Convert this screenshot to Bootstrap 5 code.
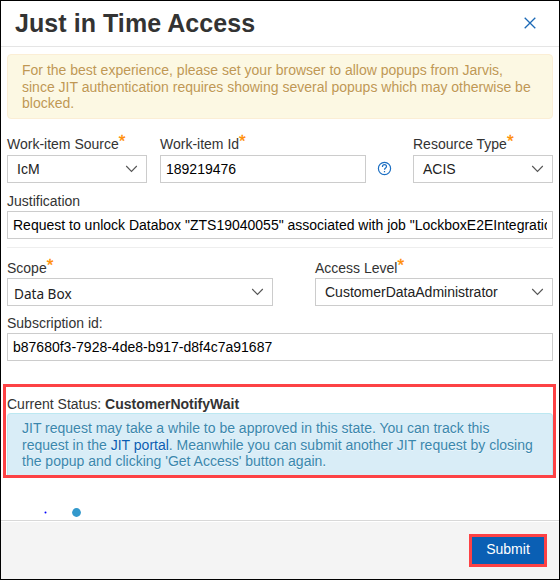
<!DOCTYPE html>
<html lang="en">
<head>
<meta charset="utf-8">
<meta name="viewport" content="width=device-width, initial-scale=1">
<title>Just in Time Access</title>
<link href="https://cdn.jsdelivr.net/npm/bootstrap@5.3.0/dist/css/bootstrap.min.css" rel="stylesheet">
<style>
body{font-family:"Liberation Sans",Arial,sans-serif;font-size:14px;line-height:16.5px;color:#333;background:#fff}
.dialog-frame{width:560px;height:580px;border:1px solid #000}
.dialog-head{height:46px;border-bottom:1px solid #e5e5e5;padding:0 23px 0 14px}
.dialog-title{font-size:25px;line-height:44px;font-weight:700;color:#333;letter-spacing:.06px;padding-bottom:2px}
.dialog-main{height:473px;padding:7px 6px 0}
.close-x{width:12px;height:12px;margin-bottom:1px}
.notice{padding:7px 14px;border-radius:4px;white-space:nowrap}
.notice-warn{height:65px;color:#c09853;background:#fcf8e3;border:1px solid #fbeed5;text-shadow:0 1px 0 rgba(255,255,255,.5)}
.notice-info{height:62px;color:#3a87ad;background:#d9edf7;border:1px solid #bce8f1;border-bottom:0;border-radius:4px 4px 0 0;padding-top:6px;text-shadow:0 1px 0 rgba(255,255,255,.5)}
.notice-info a{color:#0a5db2}
.field-label{display:block;height:19px;line-height:16px;padding-top:1px;white-space:nowrap}
.row-top .field-label{padding-top:0}
.req{font-size:17px;font-weight:400;line-height:1px;color:#ff8c00;vertical-align:2px;-webkit-text-stroke:.35px #ff8c00}
.field-box{height:28px;border:1px solid #ccc;border-radius:0;background:#fff;font-family:inherit;font-size:14px;line-height:26px;padding:0 5px;color:#000;min-height:0}
.pick{padding:0 8px 0 9px;color:#222;display:flex;align-items:center;justify-content:space-between;white-space:nowrap}
.pick-scope{padding-left:6px}
.pick-alt{font-family:"Noto Sans","Open Sans",sans-serif;font-size:13.6px;line-height:22px;padding-top:3px}
.w-source{width:140px}.w-id{width:206px}.w-scope{width:266px}.w-level{width:238px}
.status-frame{height:94px;border:3px solid #fd4245;margin:23px -3px 0 -4px;padding:0 0 0 1px}
.status-line{height:26px;padding-top:9px;line-height:16px}
.dots{padding:30px 0 0 37px;gap:25px;height:40px}
.dialog-foot{height:59px;background:#f4f4f4;border-top:1px solid #d8d8d8;box-shadow:inset 0 1px 0 #fff;padding-right:12px}
.submit-mark{border:3px solid #fd4245;width:78px;height:33px;margin-top:1px}
.submit-btn{width:72px;height:27px;border:0;border-radius:0;background:#0a5fb4;color:#fff;font-size:14px;line-height:25px;padding:0 0 2px;font-family:inherit}
</style>
</head>
<body>
<div class="dialog-frame d-flex flex-column overflow-hidden">
  <header class="dialog-head d-flex align-items-center justify-content-between">
    <h1 class="dialog-title m-0">Just in Time Access</h1>
    <svg class="close-x" viewBox="0 0 12 12" fill="none" stroke="#1b69b6" stroke-width="1.3"><path d="M.7.7l10.6 10.6M11.3.7L.7 11.3"/></svg>
  </header>
  <main class="dialog-main">
    <div class="notice notice-warn">For the best experience, please set your browser to allow popups from Jarvis,<br>since JIT authentication requires showing several popups which may otherwise be<br>blocked.</div>
    <div class="row-top d-flex" style="margin-top:17px">
      <div class="w-source">
        <label class="field-label">Work-item Source<span class="req">*</span></label>
        <div class="field-box pick"><span>IcM</span><svg width="13" height="8" viewBox="0 0 13 8" fill="none" stroke="#555" stroke-width="1.1"><path d="M1.2 1l5.3 5.5L11.800 1"/></svg></div>
      </div>
      <div class="w-id" style="margin-left:13px">
        <label class="field-label" for="wid">Work-item Id<span class="req">*</span></label>
        <input id="wid" class="form-control field-box" value="189219476">
      </div>
      <svg class="align-self-end" style="margin:0 0 7px 11px" width="15" height="15" viewBox="0 0 15 15" fill="none" stroke="#1b6ec2" stroke-width="1.2"><circle cx="7.500" cy="7.500" r="6.100"/><path d="M5.500 6V5.600a2 1.900 0 0 1 4 0C9.500 7 7.500 7 7.500 8.800M7.500 10v1.300"/></svg>
      <div class="w-source ms-auto">
        <label class="field-label">Resource Type<span class="req">*</span></label>
        <div class="field-box pick"><span>ACIS</span><svg width="13" height="8" viewBox="0 0 13 8" fill="none" stroke="#555" stroke-width="1.1"><path d="M1.2 1l5.3 5.5L11.800 1"/></svg></div>
      </div>
    </div>
    <div style="margin-top:9px">
      <label class="field-label" for="just">Justification</label>
      <input id="just" class="form-control field-box" value="Request to unlock Databox &quot;ZTS19040055&quot; associated with job &quot;LockboxE2EIntegrationTest&quot;">
    </div>
    <div class="border-top" style="margin-top:8px;border-color:#eee!important"></div>
    <div class="d-flex justify-content-between" style="margin-top:11px">
      <div class="w-scope">
        <label class="field-label">Scope<span class="req">*</span></label>
        <div class="field-box pick pick-scope"><span class="pick-alt">Data Box</span><svg width="13" height="8" viewBox="0 0 13 8" fill="none" stroke="#555" stroke-width="1.1"><path d="M1.2 1l5.3 5.5L11.800 1"/></svg></div>
      </div>
      <div class="w-level">
        <label class="field-label">Access Level<span class="req">*</span></label>
        <div class="field-box pick"><span>CustomerDataAdministrator</span><svg width="13" height="8" viewBox="0 0 13 8" fill="none" stroke="#555" stroke-width="1.1"><path d="M1.2 1l5.3 5.5L11.800 1"/></svg></div>
      </div>
    </div>
    <div style="margin-top:8px">
      <label class="field-label" for="sub">Subscription id:</label>
      <input id="sub" class="form-control field-box" value="b87680f3-7928-4de8-b917-d8f4c7a91687">
    </div>
    <section class="status-frame">
      <div class="status-line">Current Status: <strong>CustomerNotifyWait</strong></div>
      <div class="notice notice-info">JIT request may take a while to be approved in this state. You can track this<br>request in the <a href="#" class="text-decoration-none">JIT portal</a>. Meanwhile you can submit another JIT request by closing<br>the popup and clicking 'Get Access' button again.</div>
    </section>
    <div class="dots d-flex">
      <svg width="3" height="9" viewBox="0 0 3 9"><circle cx="1.500" cy="4.500" r="1" fill="#00f"/></svg>
      <svg width="9" height="9" viewBox="0 0 9 9"><circle cx="4.500" cy="4.500" r="4.400" fill="#3399cc"/></svg>
    </div>
  </main>
  <footer class="dialog-foot d-flex align-items-center justify-content-end">
    <div class="submit-mark"><button type="button" class="btn submit-btn d-block">Submit</button></div>
  </footer>
</div>
<script src="https://cdn.jsdelivr.net/npm/bootstrap@5.3.0/dist/js/bootstrap.bundle.min.js"></script>
</body>
</html>
